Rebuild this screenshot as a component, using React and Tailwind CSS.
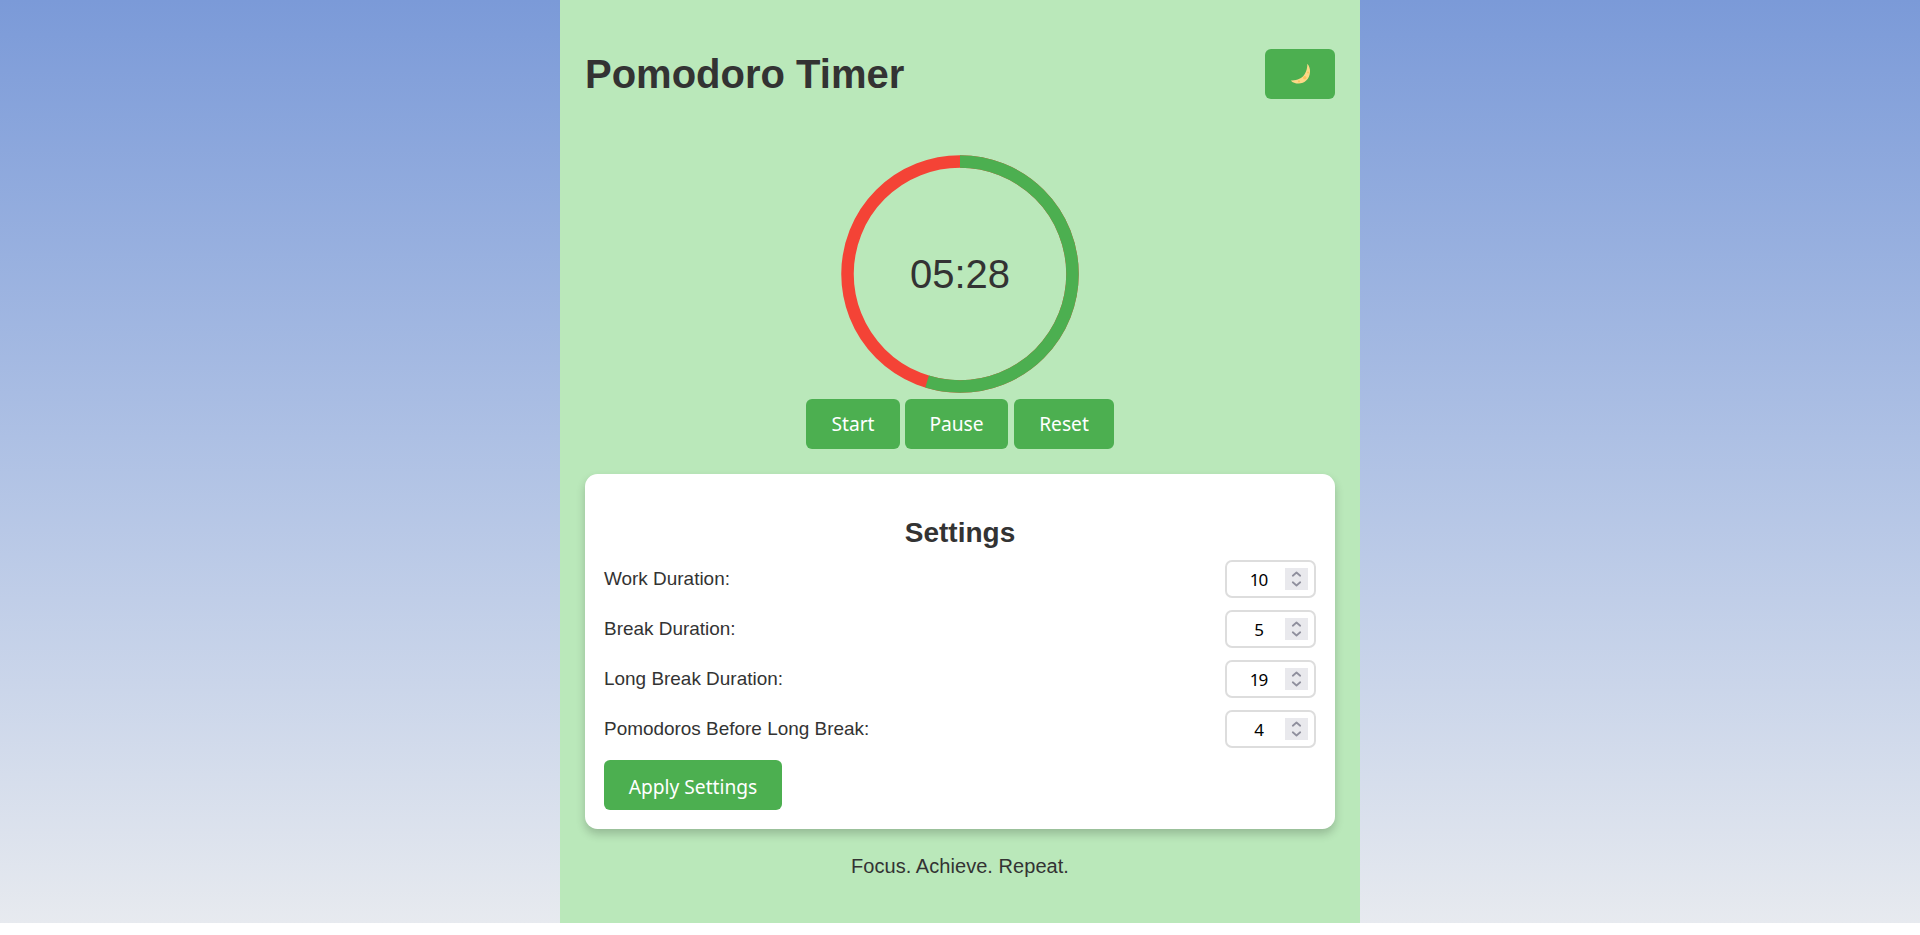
const BUTTON =
  "flex h-[50px] items-center justify-center rounded-[6px] bg-[#4caf50] font-['Noto_Sans','Open_Sans',sans-serif] text-[19.200px] leading-none font-[370] text-white";

function Button({ children, className }) {
  return <button className={`${BUTTON} ${className}`}>{children}</button>;
}

function Ring({ progress, label }) {
  const length = 2 * Math.PI * 112.5;
  return (
    <div className="grid size-[250px] place-items-center">
      <svg className="col-start-1 row-start-1 size-[250px] -rotate-90" viewBox="0 0 250 250" fill="none" strokeWidth="12.5">
        <circle cx="125" cy="125" r="112.5" stroke="#f44336" />
        <circle cx="125" cy="125" r="112.5" stroke="#4caf50" strokeDasharray={`${length * progress} ${length}`} />
      </svg>
      <div className="col-start-1 row-start-1 text-[40px] leading-none">{label}</div>
    </div>
  );
}

function Moon() {
  return (
    <svg className="size-[22px]" viewBox="0 0 22 22">
      <path d="M18.300 0.800C20.400 3.200 21.200 6 21 9C20.600 15.800 15.800 20.500 9.600 20.600C6.500 20.600 3.500 19.700 1.800 17.500C8 17.800 12.800 15.500 15.600 11.300C17.700 8 18.400 4.500 18.300 0.800Z" fill="#fdd888" />
      <circle cx="15.800" cy="14.800" r="1.700" fill="#fbc55c" />
      <circle cx="10" cy="18.300" r="1.100" fill="#fbc55c" />
      <circle cx="19" cy="9.500" r="0.900" fill="#fbc55c" />
    </svg>
  );
}

function Field({ label, value }) {
  return (
    <div className="flex h-[38px] items-center justify-between">
      <span className="text-[18.950px] leading-none">{label}</span>
      <div className="flex h-[38px] w-[91px] items-center rounded-[7px] border-2 border-[#ddd] bg-white pr-[6px]">
        <span className="flex-1 pl-[14px] text-center font-['Noto_Sans','Open_Sans',sans-serif] text-[17px] leading-none tracking-[-1px] text-black">
          {value}
        </span>
        <span className="ml-[9px] flex h-[22px] w-[23px] items-center justify-center bg-[#e9e9ed]">
          <svg className="h-[22px] w-[23px]" viewBox="0 0 23 22" fill="none" stroke="#8f8f9d" strokeWidth="1.800" strokeLinecap="round" strokeLinejoin="round">
            <path d="M7.800 7.700L11.500 4.500L15.200 7.700M7.800 14.300L11.500 17.500L15.200 14.300" />
          </svg>
        </span>
      </div>
    </div>
  );
}

const FIELDS = [
  { label: "Work Duration:", value: 10 },
  { label: "Break Duration:", value: 5 },
  { label: "Long Break Duration:", value: 19 },
  { label: "Pomodoros Before Long Break:", value: 4 },
];

export default function App() {
  return (
    <div className="h-[935px] overflow-hidden bg-white font-['Liberation_Sans',Arial,sans-serif] text-[#333]">
      <div className="flex h-[923px] justify-center bg-linear-to-b from-[#7b9ad8] to-[#e7eaef]">
        <main className="flex w-[800px] flex-col items-center bg-[#bae8ba] px-[25px] pt-[49px]">
          <header className="flex h-[50px] w-full items-center justify-between">
            <h1 className="text-[40px] leading-none font-bold">Pomodoro Timer</h1>
            <Button className="w-[70px]">
              <Moon />
            </Button>
          </header>
          <div className="mt-[50px]">
            <Ring progress={0.5467} label="05:28" />
          </div>
          <div className="flex">
            <Button className="w-[94px]">Start</Button>
            <Button className="ml-[5px] w-[103px]">Pause</Button>
            <Button className="ml-[6px] w-[100px]">Reset</Button>
          </div>
          <section className="mt-[25px] h-[355px] w-full rounded-[12.5px] bg-white px-[19px] pt-[44px] shadow-[0_5px_10px_rgba(0,0,0,0.2)]">
            <h2 className="text-center text-[28px] leading-[30px] font-bold">Settings</h2>
            <div className="mt-[12px] flex flex-col gap-[12px]">
              {FIELDS.map((field) => (
                <Field key={field.label} {...field} />
              ))}
            </div>
            <Button className="mt-[12px] w-[178px] pt-[3px]">Apply Settings</Button>
          </section>
          <p className="mt-[26px] text-[20px] leading-[22px] tracking-[0.05px]">Focus. Achieve. Repeat.</p>
        </main>
      </div>
    </div>
  );
}
